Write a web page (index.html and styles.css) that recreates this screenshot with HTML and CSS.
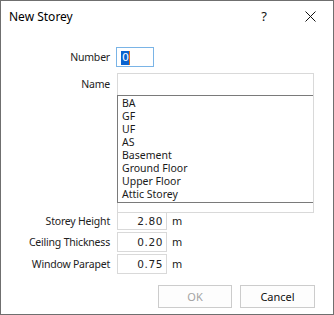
FILE: index.html
```html
<!DOCTYPE html>
<html lang="en">
<head>
  <meta charset="UTF-8">
  <meta name="viewport" content="width=device-width, initial-scale=1.0">
  <link rel="stylesheet" href="styles.css">
</head>
<body>

<div class="dialog">
  <div class="titlebar">
    <span class="title">New Storey</span>
    <span class="help">?</span>
    <svg class="close" width="11" height="11" viewBox="0 0 11 11">
      <path d="M0.5 0.5 L10.5 10.5 M10.5 0.5 L0.5 10.5" stroke="#111" stroke-width="1" fill="none"/>
    </svg>
  </div>

  <div class="form">
    <div class="row">
      <span class="label">Number</span>
      <div class="field number focused"><span class="sel">0</span></div>
    </div>

    <div class="row top">
      <span class="label name-label">Name</span>
      <div class="combo">
        <div class="combo-edit"></div>
        <ul class="combo-list">
          <li>BA</li>
          <li>GF</li>
          <li>UF</li>
          <li>AS</li>
          <li>Basement</li>
          <li>Ground Floor</li>
          <li>Upper Floor</li>
          <li>Attic Storey</li>
        </ul>
      </div>
    </div>

    <div class="row unit-row first">
      <span class="label">Storey Height</span>
      <div class="field value">2.80</div>
      <span class="unit">m</span>
    </div>
    <div class="row unit-row">
      <span class="label">Ceiling Thickness</span>
      <div class="field value">0.20</div>
      <span class="unit">m</span>
    </div>
    <div class="row unit-row">
      <span class="label">Window Parapet</span>
      <div class="field value">0.75</div>
      <span class="unit">m</span>
    </div>
  </div>

  <div class="buttons">
    <button class="btn" disabled>OK</button>
    <button class="btn">Cancel</button>
  </div>
</div>

</body>
</html>
```

FILE: styles.css
```css
body {
  margin: 0;
  font-family: "Noto Sans", sans-serif;
  font-size: 10.5px;
  color: #1a1a1a;
}

.dialog {
  width: 334px;
  height: 315px;
  box-sizing: border-box;
  border: 1px solid #6f6f6f;
  background: #fff;
}

.titlebar {
  height: 30px;
  display: flex;
  align-items: center;
  padding-left: 8px;
}

.title {
  flex: 1;
  font-size: 12px;
  color: #000;
}

.help {
  font-size: 13px;
  color: #111;
  margin-right: 38px;
}

.close {
  margin-right: 17px;
}

.form {
  padding-top: 16px;
}

.row {
  display: flex;
  align-items: center;
}

.row.top {
  align-items: flex-start;
  margin-top: 6px;
}

.label {
  width: 109px;
  text-align: right;
  margin-right: 6px;
  color: #222;
  letter-spacing: -0.2px;
}

.name-label {
  line-height: 22px;
}

.field {
  box-sizing: border-box;
  border: 1px solid #d9d9d9;
}

.number {
  width: 38px;
  height: 20px;
  padding: 2px 0 0 4px;
}

.focused {
  border-color: #7ab4e6;
}

.sel {
  display: inline-block;
  background: #0a64d0;
  color: #fff;
  font-family: "DejaVu Sans", sans-serif;
  font-size: 11px;
  line-height: 14px;
  padding: 0 0 0 1px;
  border-right: 1px solid #e0721c;
}

.combo {
  width: 197px;
  height: 140px;
  box-sizing: border-box;
  border: 1px solid #d9d9d9;
  margin-left: 1px;
}

.combo-edit {
  height: 21px;
}

.combo-list {
  list-style: none;
  margin: 0 0 0 -1px;
  padding: 1px 0 0 4px;
  border-top: 1px solid #7a7a7a;
  border-bottom: 1px solid #7a7a7a;
  border-left: 1px solid #7a7a7a;
  box-sizing: border-box;
  height: 108px;
  font-size: 10.5px;
}

.combo-list li {
  line-height: 13px;
  height: 13px;
}

.unit-row {
  margin-top: 2px;
}

.unit-row.first {
  margin-top: -1px;
}

.value {
  width: 50px;
  height: 20px;
  margin-left: 1px;
  text-align: right;
  padding-right: 3px;
  font-family: "DejaVu Sans", sans-serif;
  font-size: 10.5px;
  letter-spacing: 0.6px;
  line-height: 18px;
  color: #222;
}

.first .value {
  height: 18px;
  line-height: 16px;
}

.unit {
  margin-left: 5px;
  font-family: "DejaVu Sans", sans-serif;
  font-size: 10.5px;
}

.buttons {
  display: flex;
  justify-content: flex-end;
  gap: 8px;
  padding-right: 18px;
  margin-top: 11px;
}

.btn {
  width: 74px;
  height: 23px;
  border: 1px solid #cccccc;
  background: #fdfdfd;
  font-family: "Noto Sans", sans-serif;
  font-size: 11px;
  color: #111;
  padding: 0;
}

.btn + .btn {
  width: 75px;
}

.btn:disabled {
  color: #a3a3a3;
}
```
